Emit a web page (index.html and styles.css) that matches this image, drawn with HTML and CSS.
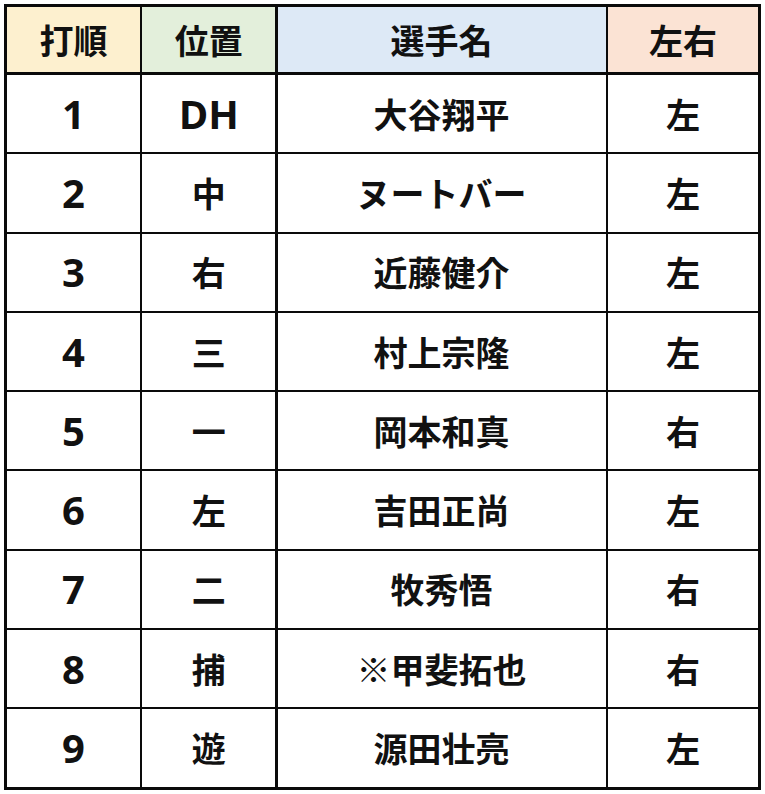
FILE: index.html
```html
<!DOCTYPE html>
<html lang="ja">
<head>
<meta charset="utf-8">
<link rel="stylesheet" href="styles.css">
</head>
<body>
<div class="lineup">
  <div class="cell head c1">打順</div>
  <div class="cell head c2">位置</div>
  <div class="cell head c3">選手名</div>
  <div class="cell head c4">左右</div>

  <div class="cell num">1</div><div class="cell"><span class="latin">DH</span></div><div class="cell">大谷翔平</div><div class="cell">左</div>
  <div class="cell num">2</div><div class="cell">中</div><div class="cell">ヌートバー</div><div class="cell">左</div>
  <div class="cell num">3</div><div class="cell">右</div><div class="cell">近藤健介</div><div class="cell">左</div>
  <div class="cell num">4</div><div class="cell">三</div><div class="cell">村上宗隆</div><div class="cell">左</div>
  <div class="cell num">5</div><div class="cell">一</div><div class="cell">岡本和真</div><div class="cell">右</div>
  <div class="cell num">6</div><div class="cell">左</div><div class="cell">吉田正尚</div><div class="cell">左</div>
  <div class="cell num">7</div><div class="cell">二</div><div class="cell">牧秀悟</div><div class="cell">右</div>
  <div class="cell num">8</div><div class="cell">捕</div><div class="cell">※甲斐拓也</div><div class="cell">右</div>
  <div class="cell num">9</div><div class="cell">遊</div><div class="cell">源田壮亮</div><div class="cell">左</div>
</div>
</body>
</html>
```

FILE: styles.css
```css
html, body {
  margin: 0;
  padding: 0;
  background: #ffffff;
}

body {
  padding: 4px 0 0 4px;
  font-family: "Noto Sans CJK JP", "Noto Sans", sans-serif;
  color: #111111;
}

.lineup {
  display: grid;
  width: 751px;
  grid-template-columns: 133px 133px 328px 150px;
  grid-template-rows: 66px repeat(9, 77.3px);
  column-gap: 2.3px;
  row-gap: 2px;
  padding: 3px;
  background: #0a0a0a;
}

.cell {
  background: #ffffff;
  display: flex;
  align-items: center;
  justify-content: center;
  font-size: 34px;
  font-weight: 700;
  line-height: 1;
}

.head {
  margin-bottom: 1px;
}

.c1 { background: #fdf0cf; }
.c2 { background: #e3efdb; }
.c3 { background: #dde9f6; }
.c4 { background: #fbe3d4; }

.num, .latin {
  font-family: "Open Sans", "Noto Sans", sans-serif;
  font-size: 40px;
  font-weight: 700;
}
```
